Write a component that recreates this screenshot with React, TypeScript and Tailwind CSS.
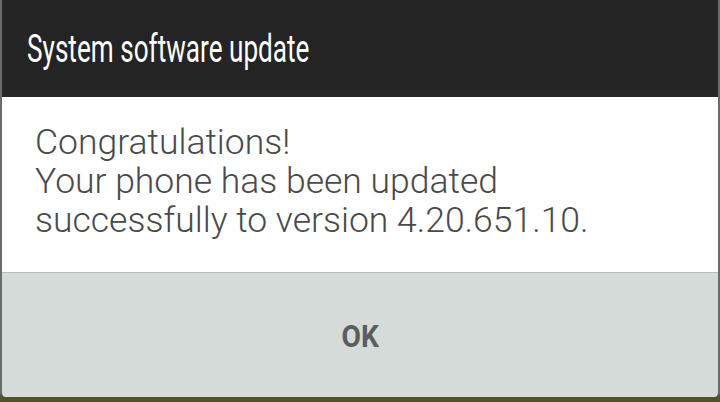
import React from "react";

export default function App() {
  return (
    <div className="w-[720px] h-[402px] bg-[#4e5428] overflow-hidden" style={{ fontFamily: "Roboto, 'Noto Sans', sans-serif" }}>
      <div className="h-[397px] flex flex-col rounded-b-[5px] overflow-hidden border-l-2 border-r-2 border-[#6b6b6b]">
        <div className="h-[97px] bg-[#242424] flex items-center pl-[25px] pt-[1px]">
          <span className="inline-block origin-left scale-x-[0.67] text-white text-[39px] leading-none whitespace-nowrap">
            System software update
          </span>
        </div>
        <div className="h-[176px] bg-white pl-[33px] pt-[26px] text-[#4a4a4a] font-light text-[35.5px] leading-[39px] border-b border-[#b8bcbb]">
          <div>Congratulations!</div>
          <div>Your phone has been updated</div>
          <div>successfully to version 4.20.651.10.</div>
        </div>
        <div className="flex-1 bg-[#d5dbd9] flex items-center justify-center">
          <span className="inline-block scale-x-[0.88] text-[#5a5d5d] font-bold text-[32px] leading-none pt-[2px]">
            OK
          </span>
        </div>
      </div>
    </div>
  );
}
